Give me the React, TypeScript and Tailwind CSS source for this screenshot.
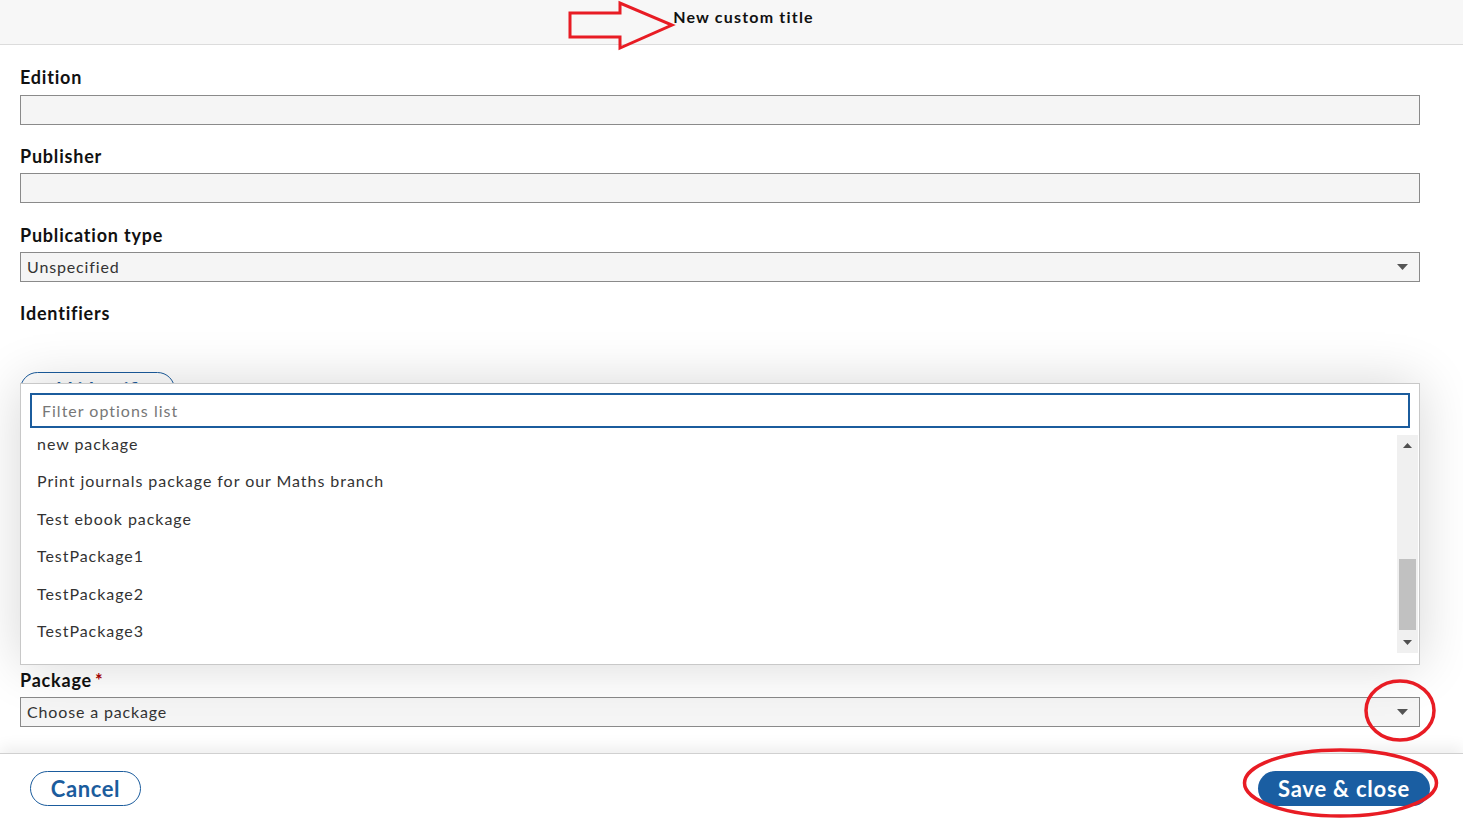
import { useState } from 'react';

const packages = [
  'new package',
  'Print journals package for our Maths branch',
  'Test ebook package',
  'TestPackage1',
  'TestPackage2',
  'TestPackage3',
];

const font = { fontFamily: 'Lato, "Liberation Sans", sans-serif' };

function Caret() {
  return (
    <svg width="11" height="6" viewBox="0 0 11 6" className="shrink-0">
      <path d="M0 0h11L5.5 6z" fill="#555" />
    </svg>
  );
}

function Label({ children, required }: { children: string; required?: boolean }) {
  return (
    <div className="h-[24px] text-[18px] leading-[24px] font-bold tracking-[0.8px] text-[#111]">
      {children}
      {required && <span className="ml-[3px] text-[#a00]">*</span>}
    </div>
  );
}

function TextField() {
  return <div className="h-[30px] w-[1400px] border border-[#8a8a8a] bg-[#f5f5f5]" />;
}

function SelectField({ value }: { value: string }) {
  return (
    <div className="flex h-[30px] w-[1400px] items-center justify-between border border-[#8a8a8a] bg-[#f5f5f5] pl-[6px] pr-[11px] text-[16px] tracking-[0.85px] text-[#333]">
      <span>{value}</span>
      <Caret />
    </div>
  );
}

function OptionsPopup() {
  const [filter, setFilter] = useState('');
  const items = packages.filter((p) => p.toLowerCase().includes(filter.toLowerCase()));

  return (
    <div className="absolute bottom-full left-0 mb-[3px] h-[282px] w-[1400px] border border-[#c8c8c8] bg-white shadow-[0_0_50px_rgba(0,0,0,0.16)]">
      <div className="px-[9px] pt-[9px]">
        <input
          value={filter}
          onChange={(e) => setFilter(e.target.value)}
          placeholder="Filter options list"
          className="h-[35px] w-full border-2 border-[#1b5c9d] bg-white px-[10px] text-[16px] tracking-[1px] text-[#333] outline-none placeholder:text-[#777]"
          style={font}
        />
      </div>
      <div className="mt-[7px] flex h-[218px]">
        <ul className="flex-1 overflow-hidden">
          <div className="-mt-[10px]">
            {items.map((p) => (
              <li key={p} className="flex h-[37.5px] items-center pl-[16px] text-[16px] tracking-[0.95px] text-[#333]">
                {p}
              </li>
            ))}
          </div>
        </ul>
        {/* scrollbar */}
        <div className="mr-[1px] flex w-[21px] flex-col items-center bg-[#f0f0f0]">
          <div className="flex h-[21px] items-center justify-center">
            <svg width="9" height="5" viewBox="0 0 9 5">
              <path d="M0 5h9L4.5 0z" fill="#505050" />
            </svg>
          </div>
          <div className="mt-[103px] h-[71px] w-[17px] bg-[#c1c1c1]" />
          <div className="mt-auto flex h-[21px] items-center justify-center">
            <svg width="9" height="5" viewBox="0 0 9 5">
              <path d="M0 0h9L4.5 5z" fill="#505050" />
            </svg>
          </div>
        </div>
      </div>
    </div>
  );
}

export default function App() {
  return (
    <div className="relative h-[821px] w-full overflow-hidden bg-white" style={font}>
      <header className="flex h-[45px] items-start justify-center border-b border-[#dcdcdc] bg-[#f7f7f7] pt-[7px] pl-[24px]">
        <h1 className="text-[16px] leading-[20px] font-bold tracking-[1.2px] text-[#111]">New custom title</h1>
      </header>

      <main className="px-[20px] pt-[20px] pb-[26px]">
        <Label>Edition</Label>
        <div className="mt-[6px]">
          <TextField />
        </div>

        <div className="mt-[19px]">
          <Label>Publisher</Label>
        </div>
        <div className="mt-[5px]">
          <TextField />
        </div>

        <div className="mt-[20px]">
          <Label>Publication type</Label>
        </div>
        <div className="mt-[5px]">
          <SelectField value="Unspecified" />
        </div>

        <div className="mt-[19px]">
          <Label>Identifiers</Label>
        </div>
        <button className="mt-[47px] h-[35px] w-[155px] rounded-full border border-[#1b5c9d] text-[20px] font-bold text-[#1b5c9d]">
          Add identifier
        </button>

        {/* package field with its options list opened above */}
        <div className="relative mt-[261px]">
          <OptionsPopup />
          <Label required>Package</Label>
          <div className="mt-[5px]">
            <SelectField value="Choose a package" />
          </div>
        </div>
      </main>

      <footer className="relative flex h-[68px] items-start justify-between border-t border-[#d0d0d0] bg-white pt-[17px] pl-[30px] pr-[33px] shadow-[0_-6px_14px_rgba(0,0,0,0.07)]">
        <button className="h-[35px] w-[111px] rounded-full border border-[#1b5c9d] bg-white text-[22px] font-bold tracking-[0.6px] text-[#1b5c9d]">
          Cancel
        </button>
        <button className="h-[35px] w-[172px] rounded-full bg-[#1a5ea2] text-[22px] font-bold tracking-[0.8px] text-white">
          Save &amp; close
        </button>
      </footer>

      {/* red markup */}
      <svg className="pointer-events-none absolute inset-0" width="1463" height="821" viewBox="0 0 1463 821">
        <path
          d="M570 13H620V3L672 25L620 48V37H570Z"
          fill="none"
          stroke="#e81c24"
          strokeWidth="3"
          strokeLinejoin="miter"
        />
        <ellipse cx="1400" cy="710.5" rx="34" ry="29.5" fill="none" stroke="#e81c24" strokeWidth="3.5" />
        <ellipse cx="1340.5" cy="783" rx="96" ry="33" fill="none" stroke="#e81c24" strokeWidth="3.5" />
      </svg>
    </div>
  );
}
